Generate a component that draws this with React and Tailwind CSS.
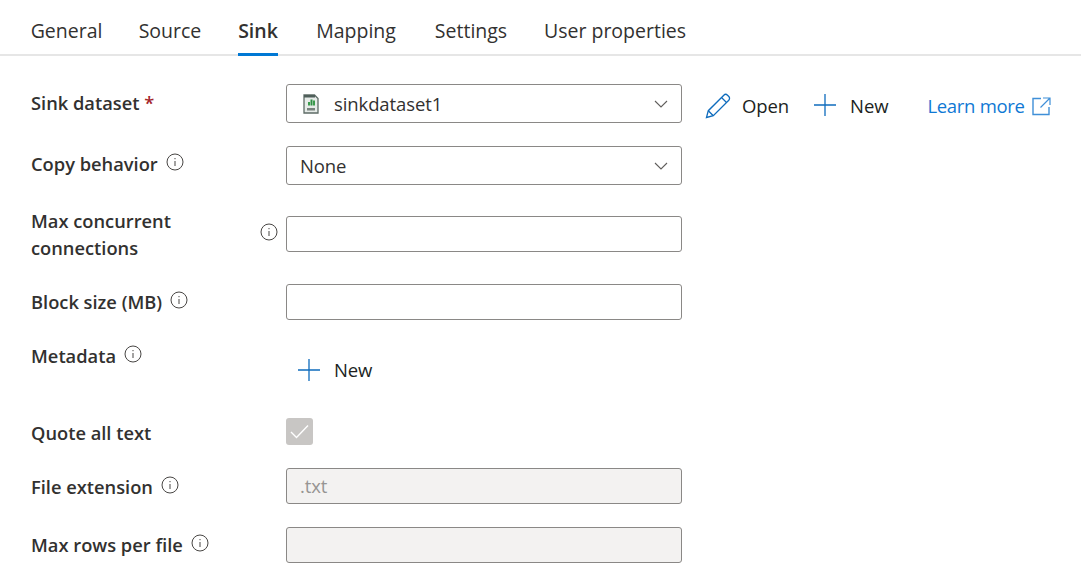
const font = { fontFamily: '"Open Sans", "Noto Sans", sans-serif' };

function InfoIcon() {
  return (
    <svg width="18" height="18" viewBox="0 0 18 18" fill="none" className="shrink-0">
      <circle cx="9" cy="9" r="8" stroke="#484644" strokeWidth="1" />
      <rect x="8.5" y="8" width="1" height="5" fill="#484644" />
      <rect x="8.5" y="5" width="1" height="1.2" fill="#484644" />
    </svg>
  );
}

function PlusIcon() {
  return (
    <svg width="24" height="24" viewBox="0 0 24 24" fill="none">
      <path d="M12 1v22M1 12h22" stroke="#0f6cbd" strokeWidth="1.3" />
    </svg>
  );
}

function Chevron() {
  return (
    <svg width="14" height="8" viewBox="0 0 14 8" fill="none">
      <path d="M1 1l6 6 6-6" stroke="#605e5c" strokeWidth="1.1" />
    </svg>
  );
}

// small csv file icon in the dataset select
function CsvIcon() {
  return (
    <svg width="16" height="20" viewBox="0 0 16 20">
      <path d="M1 1h10.5L15 4.5V19H1z" fill="#e6ebe8" stroke="#5d6b66" strokeWidth="1.3" />
      <rect x="1" y="1" width="11" height="2.5" fill="#4f5f5a" />
      <rect x="5" y="8" width="2" height="3.5" fill="#3b9b4d" />
      <rect x="7.5" y="5.5" width="2" height="6" fill="#2f8f45" />
      <rect x="10" y="6.5" width="2" height="5" fill="#3b9b4d" />
      <rect x="4" y="14" width="8" height="2.5" fill="#77827d" />
    </svg>
  );
}

function Label({ children, info, className = '' }) {
  return (
    <div className={`w-[255px] shrink-0 flex items-start gap-[8px] text-[18.3px] leading-[27px] font-semibold text-[#323130] ${className}`}>
      {children}
      {info && <span className="mt-[3px]"><InfoIcon /></span>}
    </div>
  );
}

function TextBox({ disabled, value }) {
  return (
    <div className={`w-[396px] h-[36px] rounded-[3px] border px-[13px] flex items-center text-[18.5px] tracking-[-0.1px] ${disabled ? 'bg-[#f3f2f1] border-[#8a8886] text-[#979593]' : 'bg-white border-[#8a8886] text-[#323130]'}`}>
      {value}
    </div>
  );
}

function Select({ children, iconGap }) {
  return (
    <div className="w-[396px] h-[39px] rounded-[3px] border border-[#8a8886] bg-white pl-[13px] pr-[13px] flex items-center justify-between text-[18.5px] tracking-[-0.1px] text-[#323130]">
      <span className={`flex items-center ${iconGap ? 'gap-[15px] pl-[3px]' : ''}`}>{children}</span>
      <Chevron />
    </div>
  );
}

export default function App() {
  const tabs = [
    { name: 'General', width: 'w-[71px]' },
    { name: 'Source', width: 'w-[64px]' },
    { name: 'Sink', width: 'w-[40px]' },
    { name: 'Mapping', width: 'w-[84px]' },
    { name: 'Settings', width: 'w-[74px]' },
    { name: 'User properties', width: 'w-[142px]' },
  ];

  return (
    <div style={font} className="w-[1081px] h-[582px] overflow-hidden bg-white">
      <div className="h-[56px] border-b-2 border-[#e6e6e6] flex pl-[31px] gap-[36px] text-[19.5px] text-[#323130]">
        {tabs.map((t) => (
          <div key={t.name} className={`${t.width} h-[56px] pt-[17px] leading-[28px] whitespace-nowrap flex justify-center ${t.name === 'Sink' ? 'font-semibold border-b-[3px] border-[#0078d4]' : ''}`}>
            {t.name}
          </div>
        ))}
      </div>

      <div className="pl-[31px] pt-[28px]">
        <div className="flex items-start">
          <Label className="pt-[5px]">
            <span>Sink dataset <span className="text-[#a4262c]">*</span></span>
          </Label>
          <Select iconGap>
            <CsvIcon />
            sinkdataset1
          </Select>
          <div className="flex items-center h-[44px] ml-[23px] text-[18.5px] tracking-[-0.1px] text-[#201f1e]">
            <svg width="26" height="26" viewBox="0 0 26 26" fill="none" className="mr-[11px]">
              <path d="M1.5 24.5l1.8-6.8L18.8 2.2c1-1 2.7-1 3.7 0l1.3 1.3c1 1 1 2.7 0 3.7L8.3 22.7z" stroke="#0f6cbd" strokeWidth="1.3" />
              <path d="M3.3 17.7l5 5M16.5 4.5l5 5" stroke="#0f6cbd" strokeWidth="1.3" />
            </svg>
            <span>Open</span>
            <span className="ml-[24px] mr-[13px] -mt-[3px]"><PlusIcon /></span>
            <span>New</span>
            <span className="ml-[39px] tracking-[-0.3px] text-[#0f78d4]">Learn more</span>
            <svg width="19" height="19" viewBox="0 0 19 19" fill="none" className="ml-[7px]">
              <path d="M9 1.5H1v16h16V10" stroke="#3f8fd8" strokeWidth="1.4" />
              <path d="M11 1h7v7M18 1L8.5 10.5" stroke="#3f8fd8" strokeWidth="1.2" />
            </svg>
          </div>
        </div>

        <div className="flex items-start mt-[18px]">
          <Label className="pt-[4px]" info>Copy behavior</Label>
          <Select>None</Select>
        </div>

        <div className="flex items-start mt-[31px]">
          <div className="w-[255px] shrink-0 flex items-start justify-between pr-[8px] -mt-[9px] text-[18.3px] leading-[27px] font-semibold text-[#323130]">
            <span>Max concurrent<br />connections</span>
            <span className="mt-[16px]"><InfoIcon /></span>
          </div>
          <TextBox />
        </div>

        <div className="flex items-start mt-[23px]">
          <Label className="pt-[4px]" info>Block size (MB)</Label>
          <TextBox />
        </div>

        <div className="flex items-start mt-[22px]">
          <Label info>Metadata</Label>
          <div className="flex items-center ml-[11px] mt-[16px] h-[24px] text-[18.5px] tracking-[-0.1px] text-[#201f1e]">
            <PlusIcon />
            <span className="ml-[13px]">New</span>
          </div>
        </div>

        <div className="flex items-start mt-[36px]">
          <Label className="pt-[1px]">Quote all text</Label>
          <div className="w-[27px] h-[27px] rounded-[3px] bg-[#c8c6c4] flex items-center justify-center">
            <svg width="19" height="15" viewBox="0 0 19 15" fill="none">
              <path d="M1 8l5.5 5.5L18 1.5" stroke="#fff" strokeWidth="1.4" />
            </svg>
          </div>
        </div>

        <div className="flex items-start mt-[22px]">
          <Label className="pt-[5px]" info>File extension</Label>
          <TextBox disabled value=".txt" />
        </div>

        <div className="flex items-start mt-[23px]">
          <Label className="pt-[4px]" info>Max rows per file</Label>
          <TextBox disabled />
        </div>
      </div>
    </div>
  );
}
